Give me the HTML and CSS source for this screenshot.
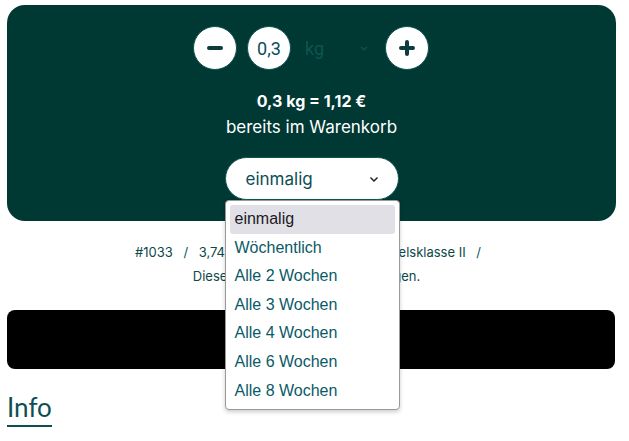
FILE: index.html
```
<!DOCTYPE html>
<html>
	<head>
		<meta charset="utf-8" />
		<title>Produkt</title>
		<link rel="stylesheet" href="styles.css">
	</head>
	<body>
		<div class="buybox">
			<div class="qty">
				<a class="round btn-minus">
					<svg width="16" height="16" viewBox="0 0 16 16"><path d="M2 8h12" stroke="#0a3d3b" stroke-width="4" stroke-linecap="round"/></svg>
				</a>
				<div class="round amount">0,3</div>
				<div class="unit">
					<span>kg</span>
					<svg width="10" height="10" viewBox="0 0 10 10"><path d="M2 4l3 3 3-3" fill="none" stroke="#0d5650" stroke-width="1.2"/></svg>
				</div>
				<a class="round btn-plus">
					<svg width="16" height="16" viewBox="0 0 16 16"><path d="M2 8h12M8 2v12" stroke="#0a3d3b" stroke-width="4" stroke-linecap="round"/></svg>
				</a>
			</div>
			<p class="price">0,3 kg = 1,12 €</p>
			<p class="incart">bereits im Warenkorb</p>
			<div class="interval">
				<div class="select">
					<span>einmalig</span>
					<svg width="12" height="12" viewBox="0 0 12 12"><path d="M2.5 4.5l3.5 3.5 3.5-3.5" fill="none" stroke="#1a1a1a" stroke-width="1.4"/></svg>
				</div>
				<ul class="options">
					<li class="active">einmalig</li>
					<li>Wöchentlich</li>
					<li>Alle 2 Wochen</li>
					<li>Alle 3 Wochen</li>
					<li>Alle 4 Wochen</li>
					<li>Alle 6 Wochen</li>
					<li>Alle 8 Wochen</li>
				</ul>
			</div>
		</div>
		<div class="meta">
			<p>#1033 <span class="sep">/</span> 3,74 € / kg <span class="sep">/</span> Spanien <span class="sep">/</span> Handelsklasse II <span class="sep">/</span></p>
			<p class="note">Dieser Artikel wird für dich gewogen.</p>
		</div>
		<a class="cartbtn">Aktualisieren</a>
		<h2 class="info">Info</h2>
	</body>
</html>
```
FILE: styles.css
```
body {
	margin: 0;
	padding: 5px 13px 0 7px;
	font-family: "Inter", "Liberation Sans", sans-serif;
	background: #fff;
}

p {
	margin: 0;
}

.buybox {
	background: #003834;
	border-radius: 18px;
	padding: 21px 0 21px 0;
	display: flex;
	flex-direction: column;
	align-items: center;
	color: #fff;
}

.qty {
	display: flex;
	align-items: center;
	gap: 10px;
	margin-left: -1px;
}

.round {
	width: 42px;
	height: 42px;
	border-radius: 50%;
	background: #fff;
	border: 1px solid #0c5650;
	display: flex;
	align-items: center;
	justify-content: center;
}

.amount {
	font-family: Roboto, sans-serif;
	font-size: 18px;
	color: #0b4d5a;
}

.unit {
	width: 74px;
	display: flex;
	align-items: center;
	justify-content: space-between;
	padding: 0 6px 0 4px;
	box-sizing: border-box;
	font-family: Roboto, sans-serif;
	font-size: 18px;
	color: #0d5650;
}

.price {
	margin-top: 19px;
	font-weight: 700;
	font-size: 16px;
	line-height: 24px;
}

.incart {
	font-size: 17px;
	line-height: 24px;
	margin-top: 2px;
}

.interval {
	position: relative;
	margin-top: 18px;
}

.select {
	width: 174px;
	height: 43px;
	box-sizing: border-box;
	background: #fff;
	border: 1px solid #0c5650;
	border-radius: 22px;
	display: flex;
	align-items: center;
	justify-content: space-between;
	padding: 0 18px 0 20px;
	font-size: 17px;
	color: #0b4f55;
}

.options {
	position: absolute;
	top: 43px;
	left: 0;
	width: 175px;
	box-sizing: border-box;
	margin: 0;
	padding: 4px;
	list-style: none;
	background: #fff;
	border: 1px solid #9a9a9a;
	border-radius: 4px;
	box-shadow: 0 2px 4px rgba(0, 0, 0, 0.2);
	font-family: "Liberation Sans", Arial, sans-serif;
	font-size: 16px;
	color: #0a5a66;
	z-index: 2;
}

.options li {
	height: 28.6px;
	line-height: 28.6px;
	padding: 0 5px;
	border-radius: 3px;
}

.options li.active {
	background: #e1e0e6;
	color: #1a1a24;
}

.meta {
	margin-top: 19px;
	text-align: center;
	font-size: 13px;
	line-height: 24px;
	color: #0d4847;
}

.meta .sep {
	color: #0b5a66;
	margin: 0 7px;
}

.meta .note {
	padding-right: 10px;
}

.cartbtn {
	display: flex;
	height: 59px;
	margin-top: 22px;
	margin-right: 1px;
	align-items: center;
	justify-content: center;
	background: #000;
	border-radius: 8px;
	color: #fff;
	font-weight: 700;
	font-size: 15px;
}

.info {
	display: inline-block;
	margin: 21px 0 0 0;
	font-family: Lato, sans-serif;
	font-weight: 400;
	font-size: 26px;
	line-height: 34px;
	color: #0b5050;
	border-bottom: 2px solid #0b5050;
	padding-bottom: 1px;
}
```
